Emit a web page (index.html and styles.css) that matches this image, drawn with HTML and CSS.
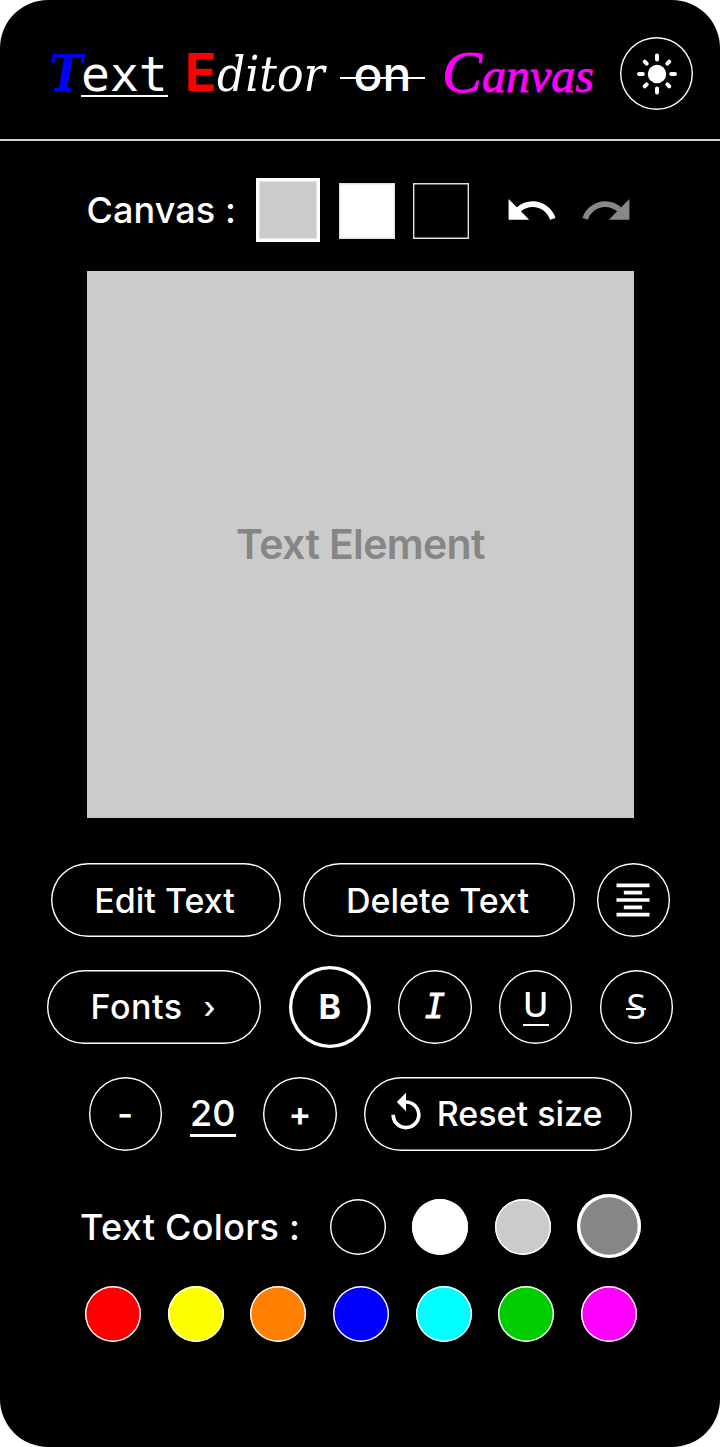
FILE: index.html
```html
<!DOCTYPE html>
<html lang="en">
<head>
<meta charset="utf-8">
<title>Text Editor on Canvas</title>
<link rel="stylesheet" href="styles.css">
</head>
<body>
<main class="app">
  <header class="header">
    <h1 class="title"><span class="t-cap">T</span><span class="t-mono">ext</span><span class="t-e">E</span><span class="t-serif">ditor</span><span class="t-strike">on</span><span class="t-script">Canvas</span></h1>
    <button class="round sun" aria-label="Toggle theme">
      <svg width="44" height="44" viewBox="-22 -22 44 44"><circle r="9.2" fill="#fff"/><path d="M0-14.4v-4M0 14.4v4M-14.2 0h-3.8M14.2 0h3.8M-10.3-10.3l-2-2M10.3 10.3l2 2M-10.3 10.3l-2 2M10.3-10.3l2-2" stroke="#fff" stroke-width="4" stroke-linecap="round"/></svg>
    </button>
  </header>

  <section class="canvas-bar">
    <span class="label canvas-label">Canvas :</span>
    <button class="square gray selected" aria-label="Gray"></button>
    <button class="square white" aria-label="White"></button>
    <button class="square black" aria-label="Black"></button>
    <svg class="undo" viewBox="0 0 24 24"><path fill="#fff" d="M12.5 8c-2.65 0-5.05.99-6.9 2.6L2 7v9h9l-3.62-3.62c1.39-1.16 3.16-1.88 5.12-1.88 3.54 0 6.55 2.31 7.6 5.5l2.37-.78C21.08 11.03 17.15 8 12.5 8z"/></svg>
    <svg class="redo" viewBox="0 0 24 24"><path fill="#888" d="M18.4 10.6C16.55 8.99 14.15 8 11.5 8c-4.65 0-8.58 3.03-9.96 7.22L3.9 16c1.05-3.19 4.05-5.5 7.6-5.5 1.95 0 3.73.72 5.12 1.88L13 16h9V7l-3.6 3.6z"/></svg>
  </section>

  <section class="canvas"><span class="element">Text Element</span></section>

  <section class="row row-edit">
    <button class="pill edit">Edit Text</button>
    <button class="pill delete">Delete Text</button>
    <button class="round" aria-label="Align center"><svg width="44" height="44" viewBox="0 0 24 24"><path fill="#fff" d="M7 15v2h10v-2H7zm-4 6h18v-2H3v2zm0-8h18v-2H3v2zm4-6v2h10V7H7zM3 3v2h18V3H3z"/></svg></button>
  </section>

  <section class="row row-style">
    <button class="pill fonts"><span>Fonts</span><span class="chevron">›</span></button>
    <button class="round active bold">B</button>
    <button class="round italic">I</button>
    <button class="round under"><span>U</span></button>
    <button class="round strike"><span>S</span></button>
  </section>

  <section class="row row-size">
    <button class="round sign">-</button>
    <span class="size">20</span>
    <button class="round sign">+</button>
    <button class="pill reset"><svg width="44" height="44" viewBox="0 0 24 24"><path fill="#fff" d="M12 5V1L7 6l5 5V7c3.31 0 6 2.69 6 6s-2.69 6-6 6-6-2.69-6-6H4c0 4.42 3.58 8 8 8s8-3.58 8-8-3.58-8-8-8z"/></svg><span>Reset size</span></button>
  </section>

  <section class="row row-colors">
    <span class="label colors-label">Text Colors :</span>
    <button class="dot black" aria-label="Black"></button>
    <button class="dot white" aria-label="White"></button>
    <button class="dot gray" aria-label="Light gray"></button>
    <button class="dot dark selected" aria-label="Gray"></button>
  </section>
  <section class="row row-palette">
    <button class="dot red" aria-label="Red"></button>
    <button class="dot yellow" aria-label="Yellow"></button>
    <button class="dot orange" aria-label="Orange"></button>
    <button class="dot blue" aria-label="Blue"></button>
    <button class="dot cyan" aria-label="Cyan"></button>
    <button class="dot green" aria-label="Green"></button>
    <button class="dot magenta" aria-label="Magenta"></button>
  </section>
</main>
</body>
</html>
```
FILE: styles.css
```css
* { box-sizing: border-box; }
body { margin: 0; background: #fff; }
.app {
  width: 720px;
  height: 1447px;
  background: #000;
  border-radius: 48px;
  color: #fff;
  font-family: Inter, sans-serif;
  font-weight: 500;
  overflow: hidden;
}
button {
  margin: 0;
  padding: 0;
  font: inherit;
  color: inherit;
  background: none;
  border: 0;
  box-shadow: inset 0 0 0 1.4px #fff;
  flex: none;
}
svg { display: block; flex: none; }

.header {
  display: flex;
  height: 141px;
  border-bottom: 2px solid #d0d0d0;
  padding: 37px 0 0 50px;
}
.title {
  display: flex;
  align-items: baseline;
  margin: -1px 0 0;
  width: 570px;
  height: 74px;
  line-height: 74px;
  font-size: 48px;
  font-weight: 500;
  white-space: nowrap;
}
.title > span { flex: none; }
.t-cap { width: 31px; color: #00f; font: italic bold 50px/74px "DejaVu Serif Condensed", "DejaVu Serif", serif; text-indent: -1px; }
.t-mono { width: 87px; height: 60px; border-bottom: 2px solid #fff; font: 400 48px/74px "DejaVu Sans Mono", monospace; }
.t-e { width: 31px; margin-left: 17px; color: #f00; font: bold 52px/74px Inter, sans-serif; }
.t-serif { width: 112px; font: italic 49px/74px "DejaVu Serif Condensed", "DejaVu Serif", serif; text-indent: 1px; }
.t-strike {
  width: 85px;
  margin-left: 12px;
  text-align: center;
  background: linear-gradient(#fff, #fff) 0 40px / 100% 2px no-repeat;
}
.t-script { display: block; margin-left: 17px; color: #f0f; font: italic 48px/74px "Liberation Serif", serif; -webkit-text-stroke: 0.8px #f0f; transform: translateY(1px); }
.t-script::first-letter { font-size: 60px; line-height: 1; }

.round {
  display: flex;
  align-items: center;
  justify-content: center;
  width: 73.3px;
  height: 73.3px;
  border-radius: 50%;
  font-size: 34px;
}
.label { font-size: 36px; letter-spacing: 0.2px; white-space: nowrap; flex: none; }

.canvas-bar { display: flex; align-items: center; height: 64px; margin-top: 37px; padding-left: 86.5px; }
.canvas-label { width: 169.5px; letter-spacing: 0.1px; }
.square { width: 56px; height: 56px; margin: 1px 18px 0 0; box-shadow: inset 0 0 0 1.4px #e0e0e0; }
.square.selected { width: 64px; height: 64px; margin: 0 19px 0 0; box-shadow: inset 0 0 0 3.4px #fff; }
.undo { width: 55px; height: 55px; margin-left: 17px; }
.redo { width: 55px; height: 55px; margin-left: 19.5px; }

.canvas {
  display: flex;
  align-items: center;
  justify-content: center;
  width: 547px;
  height: 547px;
  margin: 29px 0 0 87px;
  background: #cbcbcb;
}
.element { margin-top: -2px; color: #868686; font-size: 41px; font-weight: 600; letter-spacing: -0.65px; }

.row { display: flex; align-items: center; }
.pill {
  display: flex;
  align-items: center;
  justify-content: center;
  height: 74px;
  border-radius: 37px;
  font-size: 34px;
  white-space: nowrap;
}
.row-edit { margin-top: 45px; padding-left: 50.5px; gap: 22px; }
.edit { width: 230px; padding-right: 2px; }
.delete { width: 272px; padding-right: 2px; }
.row-style { height: 82px; margin-top: 29px; padding-left: 47.3px; }
.fonts { width: 214px; gap: 21px; letter-spacing: 0.5px; padding: 0 2px 1px 0; }
.chevron { font-size: 30px; }
.row-style .round { margin-left: 27.5px; }
.round.active { width: 82px; height: 82px; box-shadow: inset 0 0 0 3.3px #fff; }
.bold { padding-bottom: 1px; font-weight: 700; }
.italic { padding-bottom: 2px; font: italic 400 34px "DejaVu Sans Mono", monospace; -webkit-text-stroke: 0.8px #fff; }
.under { font: 500 35px "Noto Sans", sans-serif; }
.under span { width: 26px; height: 38px; line-height: 32px; border-bottom: 2.5px solid #fff; text-align: center; }
.strike { padding-right: 1px; padding-bottom: 3px; font: 400 35px "Noto Sans", sans-serif; }
.strike span { width: 20px; text-align: center; background: linear-gradient(#fff, #fff) 0 26px / 100% 2px no-repeat; }
.row-size { margin-top: 29px; padding-left: 88.5px; }
.sign { font-weight: 600; }
.size { width: 46px; height: 46px; margin: 0 27.5px 0 28px; border-bottom: 3px solid #fff; font-size: 36px; line-height: 45px; text-align: center; }
.reset { width: 268px; margin-left: 27.5px; gap: 9px; padding: 0 10px 2px 0; }

.row-colors { height: 64px; margin-top: 43px; padding-left: 80px; }
.colors-label { width: 250px; margin-top: 1px; letter-spacing: 0.3px; }
.dot { width: 56px; height: 56px; border-radius: 50%; margin-right: 26.7px; }
.row-colors .dot { margin-top: 2px; margin-right: 26.4px; }
.row-colors .dot.selected { width: 64px; height: 64px; box-shadow: inset 0 0 0 3.3px #fff; margin: 0; }
.row-palette { margin-top: 28px; padding-left: 85px; }
.black { background: #000; }
.white { background: #fff; }
.gray { background: #cbcbcb; }
.dark { background: #868686; }
.red { background: #f00; }
.yellow { background: #ff0; }
.orange { background: #ff8000; }
.blue { background: #00f; }
.cyan { background: #0ff; }
.green { background: #0c0; }
.magenta { background: #f0f; }
```
